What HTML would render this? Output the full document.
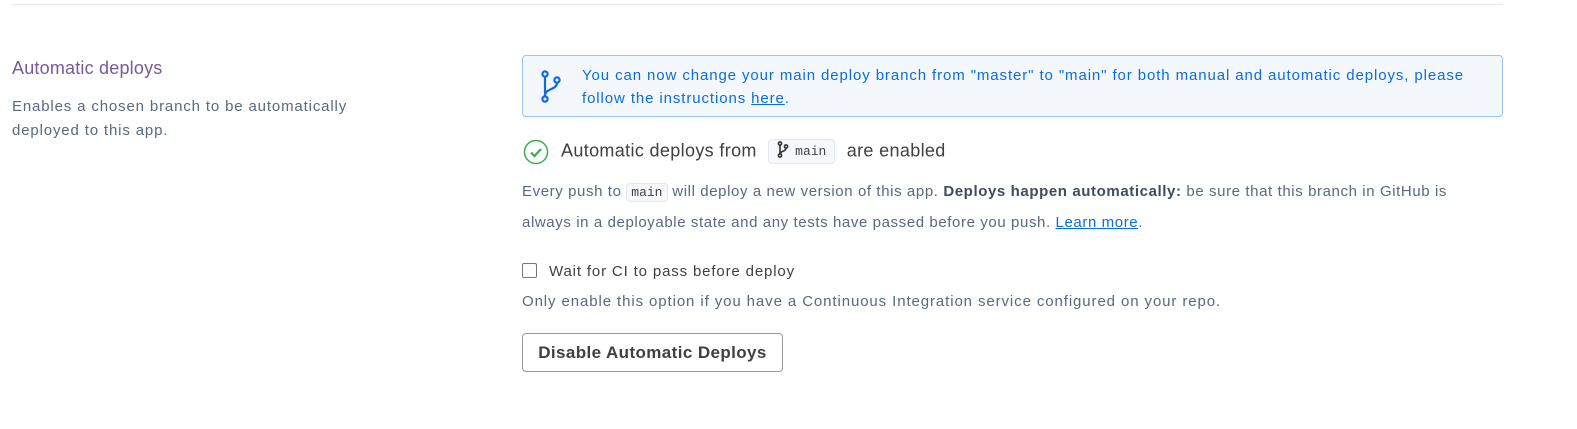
<!DOCTYPE html>
<html><head><style>
body{margin:0;width:1577px;height:429px;background:#fff;font-family:"Liberation Sans",sans-serif;color:#3f3f44;position:relative;overflow:hidden}
.a{position:absolute}
.hr{left:12px;top:4px;width:1491px;height:1px;background:#e3e7ef}
code{font-family:"Liberation Mono",monospace;font-size:13px;background:#f7f8fb;border:1px solid #e3e7ef;border-radius:4px;padding:1px 4px;color:#3f3f44;letter-spacing:0}
</style></head><body>
<div class="a hr"></div>
<div class="a" style="left:12px;top:58px;font-size:18px;color:#79589f;letter-spacing:0.2px">Automatic deploys</div>
<div class="a" style="left:12px;top:95px;width:380px;font-size:15px;line-height:24px;color:#596981;letter-spacing:0.85px">Enables a chosen branch to be automatically<br>deployed to this app.</div>
<div class="a" style="left:522px;top:55px;width:979px;height:60px;border:1px solid #9cc4f0;border-radius:4px;background:#f4f8fd"></div>
<svg class="a" style="left:540px;top:70px" width="22" height="34" viewBox="0 0 22 34" fill="none" stroke="#0a6dde" stroke-width="2.2"><circle cx="5" cy="4" r="2.6"/><circle cx="17" cy="10" r="2.6"/><circle cx="5" cy="29" r="2.6"/><path d="M5 7v19M17 13c0 7-12 5-12 13"/></svg>
<div class="a" style="left:582px;top:64px;width:915px;font-size:15px;line-height:23px;color:#0a6dde;letter-spacing:0.9px">You can now change your main deploy branch from "master" to "main" for both manual and automatic deploys, please<br>follow the instructions <u>here</u>.</div>
<svg class="a" style="left:523px;top:139px" width="26" height="26" viewBox="0 0 26 26"><circle cx="13" cy="13" r="11.5" fill="none" stroke="#3bad4a" stroke-width="1.5"/><path d="M8 13.5l3.5 3.5 6.5-7" fill="none" stroke="#3bad4a" stroke-width="2.2"/></svg>
<div class="a" style="left:561px;top:139px;font-size:18px;line-height:22px;color:#3f3f44;letter-spacing:0.35px">Automatic deploys from <span style="display:inline-block;vertical-align:middle;margin:0 6px;border:1px solid #e3e7ef;background:#f7f8fb;border-radius:4px;padding:1px 8px;font-family:'Liberation Mono',monospace;font-size:13px;height:21px;line-height:21px;letter-spacing:0"><svg width="12" height="17" viewBox="0 0 12 17" style="vertical-align:-3px;margin-right:6px" fill="none" stroke="#333" stroke-width="1.6"><circle cx="3" cy="2.5" r="1.6"/><circle cx="9" cy="5.5" r="1.6"/><circle cx="3" cy="14.5" r="1.6"/><path d="M3 4v9M9 7c0 4-6 2.5-6 6.5"/></svg>main</span> are enabled</div>
<div class="a" style="left:522px;top:177px;width:1000px;font-size:15px;line-height:30px;color:#596981;letter-spacing:0.6px">Every push to <code>main</code> will deploy a new version of this app. <b style="color:#3f4b5e">Deploys happen automatically:</b> be sure that this branch in GitHub is<br>always in a deployable state and any tests have passed before you push. <u style="color:#0a6dde">Learn more</u>.</div>
<div class="a" style="left:522px;top:263px;width:13px;height:13px;border:1.5px solid #777;border-radius:2px"></div>
<div class="a" style="left:549px;top:263px;font-size:15px;color:#3f3f44;letter-spacing:0.85px">Wait for CI to pass before deploy</div>
<div class="a" style="left:522px;top:293px;font-size:15px;color:#596981;letter-spacing:0.9px">Only enable this option if you have a Continuous Integration service configured on your repo.</div>
<div class="a" style="left:522px;top:333px;width:259px;height:37px;border:1px solid #999;border-radius:4px;font-size:17px;font-weight:bold;color:#3f3f44;line-height:37px;text-align:center;letter-spacing:0.4px">Disable Automatic Deploys</div>
</body></html>
